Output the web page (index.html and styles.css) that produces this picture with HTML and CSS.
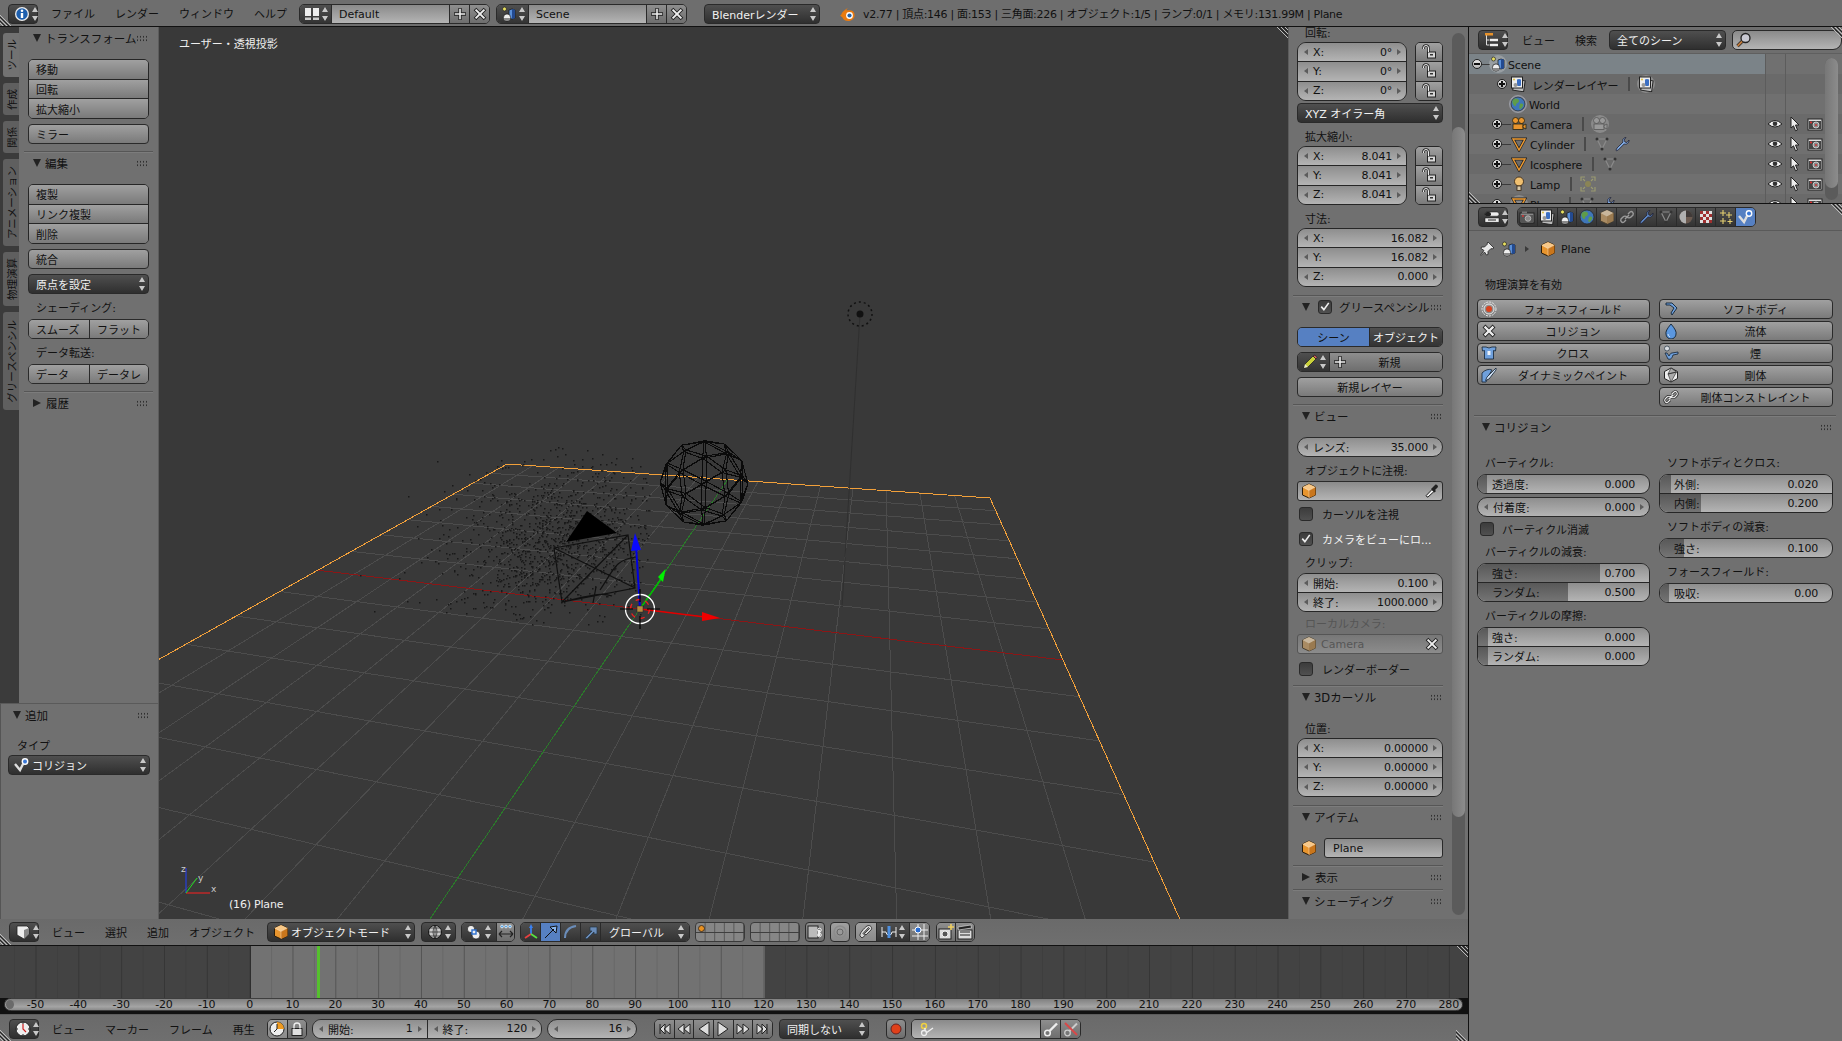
FILE: index.html
```html
<!DOCTYPE html>
<html lang="ja">
<head>
<meta charset="utf-8">
<title>Blender</title>
<link rel="stylesheet" href="styles.css">
</head>
<body>
<svg class="sprite" aria-hidden="true">
<symbol id="ud" viewBox="0 0 8 14"><path d="M4 0l3 5H1zM4 14L1 9h6z"/></symbol>
<symbol id="corner-bl" viewBox="0 0 12 12"><path d="M0 1l11 11M0 5l7 7M0 9l3 3" stroke="#bbb" fill="none"/><path d="M0 3l9 9M0 7l5 5" stroke="#222" fill="none"/></symbol>
<symbol id="corner-tr" viewBox="0 0 12 12"><path d="M1 0l11 11M5 0l7 7M9 0l3 3" stroke="#bbb" fill="none"/><path d="M3 0l9 9M7 0l5 5" stroke="#222" fill="none"/></symbol>
<symbol id="info" viewBox="0 0 16 16"><circle cx="8" cy="8" r="7" fill="#eee"/><circle cx="8" cy="8" r="5.7" fill="#1d5fae"/><rect x="6.8" y="7" width="2.4" height="5" fill="#fff"/><circle cx="8" cy="4.8" r="1.3" fill="#fff"/></symbol>
<symbol id="layout" viewBox="0 0 16 16"><rect x="1" y="2" width="6" height="8" fill="#eee"/><rect x="9" y="2" width="6" height="8" fill="#eee"/><rect x="1" y="11.5" width="6" height="2.5" fill="#ccc"/><rect x="9" y="11.5" width="6" height="2.5" fill="#ccc"/></symbol>
<symbol id="plus" viewBox="0 0 16 16"><path d="M8 2v12M2 8h12" stroke="#222" stroke-width="3.4"/><path d="M8 2.8v10.4M2.8 8h10.4" stroke="#eee" stroke-width="1.6"/></symbol>
<symbol id="cross" viewBox="0 0 16 16"><path d="M3 3l10 10M13 3L3 13" stroke="#222" stroke-width="3.8"/><path d="M3.6 3.6l8.8 8.8M12.4 3.6l-8.8 8.8" stroke="#eee" stroke-width="2"/></symbol>
<symbol id="scene" viewBox="0 0 16 16"><circle cx="3.5" cy="3" r="2" fill="#e8e060" stroke="#222" stroke-width=".7"/><path d="M8 4q3-2 6 0v8q-3 2-6 0z" fill="#5a8fd8" stroke="#111" stroke-width=".7"/><path d="M11 3v10q2 0 3-1V4q-1-1-3-1z" fill="#234a90"/><circle cx="6" cy="11.5" r="3.6" fill="#eee" stroke="#111" stroke-width=".7"/><path d="M3 12a3 3 0 0 0 6 0z" fill="#888"/></symbol>
<symbol id="logo" viewBox="0 0 16 16"><path d="M1 10C1 6 6 3 8 2L6 4.2h3.5c4 0 5.5 3 5 6-.6 3-3.5 4.8-6.5 4.8-3 0-5-1.600-5.500-3.500L0 9.500l3-1.500z" fill="#e87a10"/><circle cx="9.500" cy="9.500" r="3.400" fill="#fff"/><circle cx="9.500" cy="9.500" r="2.100" fill="#2663a8"/></symbol>
<symbol id="cube" viewBox="0 0 16 16"><path d="M8 1l6.500 3v8L8 15l-6.500-3V4z" fill="#e8952e" stroke="#2a1c0a"/><path d="M8 1l6.500 3L8 7.500 1.500 4z" fill="#f8c888"/><path d="M8 7.500V15l6.500-3V4z" fill="#c9761c"/><path d="M8 7.500V15M1.500 4L8 7.500l6.500-3.500" fill="none" stroke="#fff" stroke-opacity=".5" stroke-width=".7"/></symbol>
<symbol id="cubeg" viewBox="0 0 16 16"><path d="M8 1l6.500 3v8L8 15l-6.500-3V4z" fill="#a98b63" stroke="#4a4030"/><path d="M8 1l6.500 3L8 7.500 1.500 4z" fill="#c8b69c"/><path d="M8 7.500V15l6.500-3V4z" fill="#9a7a50"/></symbol>
<symbol id="lock" viewBox="0 0 16 16"><rect x="6.500" y="8" width="8" height="6" fill="#d8d8d8" stroke="#222"/><rect x="9" y="10" width="3" height="1.500" fill="#333"/><path d="M7.500 8V4a2.500 2.500 0 0 0-5 0v1" fill="none" stroke="#222" stroke-width="2.400"/><path d="M7.500 8V4a2.500 2.500 0 0 0-5 0v1" fill="none" stroke="#eee" stroke-width="1"/></symbol>
<symbol id="check" viewBox="0 0 16 16"><path d="M3 7.500l3.500 4L13 2.500" fill="none" stroke="#eee" stroke-width="2.200"/></symbol>
<symbol id="pencil" viewBox="0 0 16 16"><path d="M2 14l1-4L11 2l3 3-8 8z" fill="#c9d03a" stroke="#222" stroke-width=".8"/><path d="M11 2l3 3 1-1.500L13 1z" fill="#e06060" stroke="#222" stroke-width=".8"/><path d="M2 14l1-4 3 3z" fill="#eec"/></symbol>
<symbol id="dropper" viewBox="0 0 16 16"><path d="M3 14l-.8-1.500L8 6.500 10 8.500 4 14z" fill="#eee" stroke="#222"/><path d="M8 5l3-3c1-1 3 0 3 2l-3 3 1 1-1.500 1.500L7 6l1-1z" fill="#222"/></symbol>
<symbol id="outliner" viewBox="0 0 16 16"><path d="M2.500 2v11h3M2.500 8h3" fill="none" stroke="#ddd"/><rect x="1" y="1" width="8" height="2.500" fill="#e8922a"/><rect x="6" y="6.800" width="8" height="2.400" fill="#eee"/><rect x="6" y="11.800" width="8" height="2.400" fill="#eee"/></symbol>
<symbol id="search" viewBox="0 0 16 16"><circle cx="9.500" cy="6" r="4.500" fill="#c9c9d2" stroke="#222" stroke-width="1.300"/><path d="M6 9.500l-4.500 4.500" stroke="#222" stroke-width="3.200"/><path d="M6 9.500l-4.500 4.500" stroke="#c07a3c" stroke-width="1.800"/></symbol>
<symbol id="rlayer" viewBox="0 0 16 16"><rect x="3.500" y="4" width="11" height="11" fill="#bbb" stroke="#222" transform="rotate(8 9 9)"/><rect x="1.500" y="1" width="11" height="11" fill="#eee" stroke="#222"/><path d="M7 3.500q2-1 4 0v6q-2 1-4 0z" fill="#3b6fc4"/><circle cx="5.500" cy="9" r="2" fill="#999"/><circle cx="4" cy="3.500" r="1" fill="#e0c040"/></symbol>
<symbol id="world" viewBox="0 0 16 16"><circle cx="8" cy="8" r="7" fill="#3f76b8" stroke="#222" stroke-width=".7"/><path d="M4 3c3-1 5 0 5 2s-3 2-3 4-2 1-3-1-1-4 1-5zM10 8c2-1 4 0 3 2s-2 3-3 3-1-3 0-5z" fill="#5f9c4a"/></symbol>
<symbol id="cam" viewBox="0 0 16 16"><circle cx="4.500" cy="4.500" r="3" fill="#e8952e" stroke="#221" stroke-width=".8"/><circle cx="10.500" cy="4.500" r="3" fill="#e8952e" stroke="#221" stroke-width=".8"/><rect x="2" y="8" width="10" height="5.500" fill="#e8952e" stroke="#221" stroke-width=".8"/><path d="M12 9.500l3-1.500v5l-3-1.500z" fill="#e8952e" stroke="#221" stroke-width=".8"/></symbol>
<symbol id="camg" viewBox="0 0 16 16"><circle cx="4.500" cy="4.500" r="3" fill="#999" stroke="#555" stroke-width=".8"/><circle cx="10.500" cy="4.500" r="3" fill="#999" stroke="#555" stroke-width=".8"/><rect x="2" y="8" width="10" height="5.500" fill="#999" stroke="#555" stroke-width=".8"/><path d="M12 9.500l3-1.500v5l-3-1.500z" fill="#999" stroke="#555" stroke-width=".8"/></symbol>
<symbol id="mesh" viewBox="0 0 16 16"><path d="M2 3h12L8 14z" fill="none" stroke="#222" stroke-width="2.800"/><path d="M2 3h12L8 14z" fill="none" stroke="#ee9a30" stroke-width="1.400"/></symbol>
<symbol id="meshg" viewBox="0 0 16 16"><path d="M3 3h10L8 13z" fill="none" stroke="#8a8a8a" stroke-width="1.200"/><circle cx="3" cy="3" r="1.500" fill="#333"/><circle cx="13" cy="3" r="1.500" fill="#333"/><circle cx="8" cy="13" r="1.500" fill="#333"/></symbol>
<symbol id="wrench" viewBox="0 0 16 16"><path d="M2 14l1-2 6-6c-1-2 0-4 3-4.500L10 4l1 2 2 .5L15 4c.3 3-2.500 5-4.800 4l-6 6-1.800.800z" fill="#7fa9e0" stroke="#223" stroke-width=".8"/></symbol>
<symbol id="wrenchg" viewBox="0 0 16 16"><path d="M2 14l1-2 6-6c-1-2 0-4 3-4.500L10 4l1 2 2 .5L15 4c.3 3-2.500 5-4.800 4l-6 6-1.800.800z" fill="#5c84bf" stroke="#223" stroke-width=".8"/></symbol>
<symbol id="bulb" viewBox="0 0 16 16"><circle cx="8" cy="5.500" r="4.500" fill="#f0c070" stroke="#321" stroke-width=".8"/><rect x="6" y="10" width="4" height="4.500" fill="#d8c8a8" stroke="#321" stroke-width=".8"/></symbol>
<symbol id="burst" viewBox="0 0 16 16"><circle cx="8" cy="8" r="3" fill="#8a8455"/><path d="M1 5V1h4M11 1h4v4M15 11v4h-4M5 15H1v-4M3 3l2 2M13 3l-2 2M3 13l2-2M13 13l-2-2" fill="none" stroke="#9a9a70" stroke-width="1.200"/></symbol>
<symbol id="eye" viewBox="0 0 16 16"><path d="M1 8q7-7 14 0-7 6-14 0z" fill="#eee" stroke="#222"/><circle cx="8" cy="7.800" r="2.300" fill="#333"/></symbol>
<symbol id="cursor" viewBox="0 0 16 16"><path d="M4 1l8 8H8.500l2 5-2 .8-2-5L4 12z" fill="#eee" stroke="#222"/></symbol>
<symbol id="rcam" viewBox="0 0 16 16"><rect x="1" y="3" width="14" height="11" fill="#ddd" stroke="#222"/><rect x="2" y="5" width="12" height="8" fill="#444"/><circle cx="9" cy="9" r="3" fill="#888" stroke="#eee" stroke-width=".7"/><circle cx="4" cy="6.500" r="1" fill="#e33"/><circle cx="9" cy="9" r="1" fill="#c33"/></symbol>
<symbol id="rcamg" viewBox="0 0 16 16"><rect x="1" y="4" width="14" height="10" fill="#888" stroke="#222"/><rect x="3" y="2.500" width="5" height="2" fill="#777"/><rect x="2" y="6" width="12" height="7" fill="#555"/><circle cx="9" cy="9.500" r="2.800" fill="#888" stroke="#ccc" stroke-width=".7"/><circle cx="4" cy="7" r=".9" fill="#d33"/></symbol>
<symbol id="props" viewBox="0 0 16 16"><rect x="1" y="3" width="14" height="4.200" rx="2" fill="#eee" stroke="#111" stroke-width=".5"/><rect x="1" y="3" width="6" height="4.200" rx="2" fill="#222"/><rect x="1" y="9" width="14" height="4.200" fill="#eee" stroke="#111" stroke-width=".5"/><path d="M4 11h8" stroke="#222"/></symbol>
<symbol id="link" viewBox="0 0 16 16"><path d="M7 11l-2 2c-2 1.500-4-1-3-3l2-2c1-1 3-1 4 0M9 5l2-2c2-1.500 4 1 3 3l-2 2c-1 1-3 1-4 0" fill="none" stroke="#222" stroke-width="2.600"/><path d="M7 11l-2 2c-2 1.500-4-1-3-3l2-2c1-1 3-1 4 0M9 5l2-2c2-1.500 4 1 3 3l-2 2c-1 1-3 1-4 0M6 10l4-4" fill="none" stroke="#e8e8e8" stroke-width="1.200"/></symbol>
<symbol id="linkg" viewBox="0 0 16 16"><path d="M7 11l-2 2c-2 1.500-4-1-3-3l2-2c1-1 3-1 4 0M9 5l2-2c2-1.500 4 1 3 3l-2 2c-1 1-3 1-4 0M6 10l4-4" fill="none" stroke="#9a9a9a" stroke-width="1.400"/></symbol>
<symbol id="mat" viewBox="0 0 16 16"><circle cx="8" cy="8" r="6.500" fill="#6b5a50"/><path d="M8 1.500a6.500 6.500 0 0 0 0 13z" fill="#b0b0b0"/><path d="M8 1.500a6.500 6.500 0 0 1 6.500 6.500H8z" fill="#403a38"/></symbol>
<symbol id="tex" viewBox="0 0 16 16"><rect x="2" y="2" width="12" height="12" fill="#e0e0e0"/><path d="M2 2h3v3H2zM8 2h3v3H8zM5 5h3v3H5zM11 5h3v3h-3zM2 8h3v3H2zM8 8h3v3H8zM5 11h3v3H5zM11 11h3v3h-3z" fill="#a03030"/></symbol>
<symbol id="part" viewBox="0 0 16 16"><path d="M5 1v6M2 4h6M11 3v6M8 6h6M5 9v6M2 12h6M12 10v5M9.500 12.500h5" stroke="#e6d070" stroke-width="1.100"/></symbol>
<symbol id="phys" viewBox="0 0 16 16"><path d="M1 7l5 6 3-6" fill="none" stroke="#ddd" stroke-width="2.400"/><circle cx="11" cy="4.500" r="3.400" fill="#fff"/><circle cx="11" cy="4.500" r="2" fill="#3a78d8"/></symbol>
<symbol id="pin" viewBox="0 0 16 16"><path d="M9 1l6 6-2 1-1-.5-3 3 0 3-1.500.5-2-3L2 14.500 1.500 14 5 9.500 2 7.500l.5-1.500 3 0 3-3-.5-1z" fill="#e8e8e8" stroke="#222" stroke-width=".8"/></symbol>
<symbol id="ff" viewBox="0 0 16 16"><circle cx="8" cy="8" r="7" fill="none" stroke="#e8e8e8" stroke-dasharray="2 1"/><circle cx="8" cy="8" r="5" fill="none" stroke="#e8e8e8"/><circle cx="8" cy="8" r="3" fill="#d8421e"/></symbol>
<symbol id="cx" viewBox="0 0 16 16"><path d="M3 3l10 10M13 3L3 13" stroke="#222" stroke-width="4"/><path d="M3.600 3.600l8.800 8.800M12.400 3.600l-8.800 8.800" stroke="#eee" stroke-width="2.200"/></symbol>
<symbol id="cloth" viewBox="0 0 16 16"><path d="M1 2h4l3 1 3-1h4l-.5 4-2-.5V14h-9V5.500l-2 .5z" fill="#6fa0dc" stroke="#123" stroke-width=".8"/><rect x="6.500" y="6" width="3" height="4" fill="#ecf2fa"/></symbol>
<symbol id="dp" viewBox="0 0 16 16"><path d="M1 6q5-5 10-3L8 8 5 15H1z" fill="#6fa0dc" stroke="#123" stroke-width=".8"/><path d="M15 1L6 10l-1.500 3.500L8 12l7-9z" fill="#cfe0f4" stroke="#123" stroke-width=".8"/></symbol>
<symbol id="soft" viewBox="0 0 16 16"><path d="M3 2h6l5 5-5 7-1-2 3-5-4-3H3z" fill="#6fa0dc" stroke="#123" stroke-width=".9"/></symbol>
<symbol id="drop" viewBox="0 0 16 16"><path d="M8 1q6 7 5 10a5 5 0 0 1-10 0Q2 8 8 1z" fill="#5b97df" stroke="#123" stroke-width=".9"/><path d="M5 11q0 2 2 3" stroke="#cfe0f8" fill="none"/></symbol>
<symbol id="smoke" viewBox="0 0 16 16"><circle cx="4" cy="3.500" r="2.500" fill="#d7dbe0" stroke="#234" stroke-width=".7"/><path d="M2 8l3 6c3 1 4-1 5-4l5-1V7l-6 1c-2 0-2 2-3 3L4 8z" fill="#6fa0dc" stroke="#123" stroke-width=".8"/></symbol>
<symbol id="rigid" viewBox="0 0 16 16"><path d="M8 1l6.500 3.500v7L8 15l-6.500-3.500v-7z" fill="#eee" stroke="#222"/><path d="M8 1l-3 6 8.500-2zM5 7l3 8 5.500-10z" fill="#aaa" stroke="#222" stroke-width=".6"/></symbol>
<symbol id="view3d" viewBox="0 0 16 16"><path d="M2 2h10l2 2v6l-5 5-7-4z" fill="#eee" stroke="#222" stroke-width=".8"/><path d="M9 6l5-2v6l-5 5z" fill="#888"/></symbol>
<symbol id="globe" viewBox="0 0 16 16"><circle cx="8" cy="8" r="6.500" fill="#ccc" stroke="#111"/><path d="M1.500 8h13M8 1.500v13M3 4h10M3 12h10M8 1.500q-4 6.500 0 13M8 1.500q4 6.500 0 13" fill="none" stroke="#222" stroke-width=".7"/></symbol>
<symbol id="pivot" viewBox="0 0 16 16"><circle cx="5" cy="5" r="3.600" fill="#eee" stroke="#111" stroke-width=".6"/><circle cx="10" cy="11" r="4" fill="#eee" stroke="#111" stroke-width=".6"/><rect x="6" y="6" width="4" height="4" fill="#eee" stroke="#2b6fd0" stroke-width="1.400"/></symbol>
<symbol id="align" viewBox="0 0 16 16"><circle cx="4" cy="2.500" r="1.400" fill="#4ea0e8" stroke="#fff" stroke-width=".7"/><circle cx="8" cy="2.500" r="1.400" fill="#4ea0e8" stroke="#fff" stroke-width=".7"/><circle cx="12" cy="2.500" r="1.400" fill="#4ea0e8" stroke="#fff" stroke-width=".7"/><path d="M1 10h14M1 10l3-3M1 10l3 3M15 10l-3-3M15 10l-3 3" fill="none" stroke="#222" stroke-width="1.200"/></symbol>
<symbol id="axes" viewBox="0 0 16 16"><path d="M8 10V2" stroke="#3a80f0" stroke-width="1.800"/><path d="M8 10l-6 4" stroke="#e84040" stroke-width="1.800"/><path d="M8 10l6 4" stroke="#58e040" stroke-width="1.800"/><path d="M8 0l2 4H6z" fill="#3a80f0"/></symbol>
<symbol id="mtrans" viewBox="0 0 16 16"><path d="M2 14l9-9M7 3l7-1-1 7z" fill="#8ab6ef" stroke="#111" stroke-width="1"/></symbol>
<symbol id="mrot" viewBox="0 0 16 16"><path d="M2 14C2 7 6 3 13 2" fill="none" stroke="#6a8cb8" stroke-width="2"/></symbol>
<symbol id="mscale" viewBox="0 0 16 16"><path d="M2 14l7-7h-2V3h7v7h-3V8l-7 7z" fill="#6a8cb8" stroke="#234" stroke-width=".7"/></symbol>
<symbol id="chainbox" viewBox="0 0 16 16"><rect x="1" y="2" width="10" height="12" fill="#bbb" stroke="#222"/><path d="M12 6v6" stroke="#eee" stroke-width="2.500"/><circle cx="12.500" cy="6" r="1.800" fill="none" stroke="#eee"/><circle cx="12.500" cy="11" r="1.800" fill="none" stroke="#eee"/></symbol>
<symbol id="ring" viewBox="0 0 16 16"><circle cx="8" cy="8" r="6" fill="none" stroke="#8c8c8c" stroke-width="1.400"/><circle cx="8" cy="8" r="3" fill="#9a9a9a" stroke="#666"/></symbol>
<symbol id="magnet" viewBox="0 0 16 16"><path d="M4 14L2 12c-1-2 4-8 7-10s6 2 4 4l-5 5-1.500-1.500 5-5-1-1-5.500 6 2 2z" fill="#d8d8d8" stroke="#222" stroke-width=".8"/></symbol>
<symbol id="snap" viewBox="0 0 16 16"><path d="M1 8h4M1 3v10M15 3v10M11 8h4M5 8a3 3 0 0 0 6 0" stroke="#eee" fill="none"/><rect x="6.500" y="2" width="3" height="12" fill="#4e90e0"/></symbol>
<symbol id="snapg" viewBox="0 0 16 16"><path d="M0 6h16M0 12h16M6 0v16M12 0v16" stroke="#eee"/><circle cx="6" cy="6" r="3" fill="#2a6cd0" stroke="#fff"/></symbol>
<symbol id="gl" viewBox="0 0 16 16"><rect x="1" y="5" width="12" height="10" fill="#ddd" stroke="#222"/><circle cx="7" cy="10" r="3" fill="#555" stroke="#eee"/><path d="M13 0v6M10 3h6" stroke="#f0d060" stroke-width="1.600"/></symbol>
<symbol id="clap" viewBox="0 0 16 16"><rect x="1" y="6" width="14" height="9" fill="#ddd" stroke="#222"/><path d="M1 3l13-2 .5 3-13 2z" fill="#222" stroke="#eee" stroke-width=".6"/><path d="M3 8h10M3 11h10" stroke="#222"/></symbol>
<symbol id="clock" viewBox="0 0 16 16"><circle cx="8" cy="8" r="7" fill="#eee" stroke="#222"/><path d="M8 3v5l3 3" fill="none" stroke="#d02020" stroke-width="1.200"/><path d="M8 1v2M8 13v2M1 8h2M13 8h2" stroke="#222"/></symbol>
<symbol id="clockp" viewBox="0 0 16 16"><circle cx="8" cy="8" r="7" fill="#eee" stroke="#222"/><path d="M8 8V1a7 7 0 0 1 7 7z" fill="#ee9a20"/><path d="M8 8V3M8 8l-3 3" stroke="#222"/></symbol>
<symbol id="padlock" viewBox="0 0 16 16"><rect x="3" y="7.500" width="10" height="7" fill="#e0e0e0" stroke="#222"/><path d="M5 7.500V5a3 3 0 0 1 6 0v2.500" fill="none" stroke="#eee" stroke-width="1.400"/></symbol>
<symbol id="tjs" viewBox="0 0 16 16"><path d="M4 3v10M14 3L8 8l6 5zM9 3L4 8l5 5z" fill="#ddd" stroke="#222"/></symbol>
<symbol id="tkey" viewBox="0 0 16 16"><path d="M14 3L8 8l6 5zM8 3L2 8l6 5z" fill="#ddd" stroke="#222"/></symbol>
<symbol id="tplayb" viewBox="0 0 16 16"><path d="M13 1L3 8l10 7z" fill="#ddd" stroke="#222"/></symbol>
<symbol id="tplay" viewBox="0 0 16 16"><path d="M3 1l10 7-10 7z" fill="#ddd" stroke="#222"/></symbol>
<symbol id="tkeyf" viewBox="0 0 16 16"><path d="M2 3l6 5-6 5zM8 3l6 5-6 5z" fill="#ddd" stroke="#222"/></symbol>
<symbol id="tje" viewBox="0 0 16 16"><path d="M12 3v10M2 3l6 5-6 5zM7 3l5 5-5 5z" fill="#ddd" stroke="#222"/></symbol>
<symbol id="rec" viewBox="0 0 16 16"><circle cx="8" cy="8" r="5" fill="#e0401a" stroke="#622"/></symbol>
<symbol id="keyring" viewBox="0 0 16 16"><circle cx="5" cy="5" r="2.500" fill="none" stroke="#f0d040" stroke-width="1.500"/><circle cx="5" cy="12" r="2.500" fill="none" stroke="#eee" stroke-width="1.300"/><path d="M6 7v3M7 12l7-5" stroke="#eee" stroke-width="1.500"/></symbol>
<symbol id="key" viewBox="0 0 16 16"><circle cx="4.500" cy="12" r="2.800" fill="none" stroke="#eee" stroke-width="1.500"/><path d="M6.500 10L14 2.500" stroke="#eee" stroke-width="2.400"/></symbol>
<symbol id="keyx" viewBox="0 0 16 16"><circle cx="4.500" cy="12" r="2.800" fill="none" stroke="#ccc" stroke-width="1.300"/><path d="M6.500 10L14 2.500" stroke="#ccc" stroke-width="2"/><path d="M2 2l12 12" stroke="#d84848" stroke-width="2"/></symbol>
</svg>

<div class="app">
<header class="topbar">
  <div class="w drop w30 ic"><svg class="i"><use href="#info"/></svg><svg class="ud"><use href="#ud"/></svg></div>
  <nav class="menus m-top"><span>ファイル</span><span>レンダー</span><span>ウィンドウ</span><span>ヘルプ</span></nav>
  <div class="seg w191">
    <div class="cell dark w31 ic"><svg class="i"><use href="#layout"/></svg><svg class="ud"><use href="#ud"/></svg></div>
    <div class="cell tf grow">Default</div>
    <div class="cell g ctr w20"><svg class="i"><use href="#plus"/></svg></div>
    <div class="cell g ctr w20"><svg class="i"><use href="#cross"/></svg></div>
  </div>
  <div class="seg w191 ml6">
    <div class="cell dark w31 ic"><svg class="i"><use href="#scene"/></svg><svg class="ud"><use href="#ud"/></svg></div>
    <div class="cell tf grow">Scene</div>
    <div class="cell g ctr w20"><svg class="i"><use href="#plus"/></svg></div>
    <div class="cell g ctr w20"><svg class="i"><use href="#cross"/></svg></div>
  </div>
  <div class="w drop w116 ml17"><span>Blenderレンダー</span><svg class="ud"><use href="#ud"/></svg></div>
  <svg class="i ml20"><use href="#logo"/></svg>
  <div class="stats">v2.77 | 頂点:146 | 面:153 | 三角面:226 | オブジェクト:1/5 | ランプ:0/1 | メモリ:131.99M | Plane</div>
  <svg class="corner bl"><use href="#corner-bl"/></svg>
</header>

<main class="work">
<section class="leftcol">
  <div class="viewrow">
    <aside class="toolcol">
      <div class="shelf">
        <div class="tabs">
          <div class="tab on t44"><span>ツール</span></div>
          <div class="tab t32"><span>作成</span></div>
          <div class="tab t32"><span>関係</span></div>
          <div class="tab t87"><span>アニメーション</span></div>
          <div class="tab t54"><span>物理演算</span></div>
          <div class="tab t98"><span>グリースペンシル</span></div>
        </div>
        <div class="panel tools">
          <div class="ph"><i class="tri"></i><b>トランスフォーム</b><i class="grip"></i></div>
          <div class="stack s60 mt10"><div class="btn">移動</div><div class="btn">回転</div><div class="btn">拡大縮小</div></div>
          <div class="w btn mt5">ミラー</div>
          <hr class="sep mt7">
          <div class="ph"><i class="tri"></i><b>編集</b><i class="grip"></i></div>
          <div class="stack s60 mt10"><div class="btn">複製</div><div class="btn">リンク複製</div><div class="btn">削除</div></div>
          <div class="w btn mt5">統合</div>
          <div class="w drop mt5"><span>原点を設定</span><svg class="ud"><use href="#ud"/></svg></div>
          <div class="lab l20 mt5">シェーディング:</div>
          <div class="hstack"><div class="btn b61">スムーズ</div><div class="btn grow">フラット</div></div>
          <div class="lab l20 mt5">データ転送:</div>
          <div class="hstack"><div class="btn b61">データ</div><div class="btn grow">データレ</div></div>
          <hr class="sep mt7">
          <div class="ph"><i class="tri r"></i><b>履歴</b><i class="grip"></i></div>
        </div>
      </div>
      <div class="panel oper">
        <div class="ph"><i class="tri"></i><b>追加</b><i class="grip"></i></div>
        <div class="lab mt11">タイプ</div>
        <div class="w drop"><span class="withic"><svg class="i"><use href="#phys"/></svg>コリジョン</span><svg class="ud"><use href="#ud"/></svg></div>
      </div>
    </aside>

    <div class="viewport">
      <svg id="scene3d" class="canvas" viewBox="159 27 1129 892" preserveAspectRatio="none">
        <g id="grid" class="crisp"></g>
        <path id="dots" class="dots"></path>
        <line x1="860" y1="314" x2="842" y2="607" class="lampline"/>
        <circle cx="860" cy="314" r="12" class="lampring"/>
        <circle cx="860" cy="314" r="3.500" class="lampcore"/>
        <path id="ico" class="wire crisp"></path>
        <path d="M587 511L566 542 617 533z" class="solid"/>
        <path class="wire1" d="M554 548L628 535 635 588 562 602zM554 548L635 588M628 535L562 602M562 602c24-6 40-10 50-6M593 603l3-16M600 590c14-20 14-30 36-33"/>
        <path d="M640 609L636 545" class="sh-blue"/>
        <path d="M635 533L641 550 631 551z" class="f-blue"/>
        <path d="M640 609L664 575" class="sh-green"/>
        <path d="M665.500 569L658 577 663 582z" class="f-green"/>
        <path d="M640 609L705 617" class="sh-red"/>
        <path d="M720 618L702 612 702 621z" class="f-red"/>
        <circle cx="640" cy="609" r="14.500" class="cur-w"/>
        <circle cx="640" cy="609" r="9.500" class="cur-r"/>
        <path d="M620 609h13M647 609h13M640 589v13M640 616v13" class="cur-k"/>
        <rect x="637" y="606" width="6" height="6" class="origin"/>
        <path d="M186 893V868" class="g-b"/><path d="M186 893H210" class="g-r"/><path d="M186 893L197 878" class="g-g"/>
        <text x="181" y="872" class="g-t">z</text><text x="198" y="881" class="g-t">y</text><text x="211" y="892" class="g-t">x</text>
      </svg>
      <div class="vlabel vl-top">ユーザー・透視投影</div>
      <div class="vlabel vl-bot">(16) Plane</div>
      <svg class="corner tr"><use href="#corner-tr"/></svg>
    </div>

    <aside class="npanel">
      <div class="panel ncontent">
        <div class="lab first">回転:</div>
        <div class="locked">
          <div class="stack s59 round">
            <div class="num"><i class="al"></i><span>X:</span><em>0°</em><i class="ar"></i></div>
            <div class="num"><i class="al"></i><span>Y:</span><em>0°</em><i class="ar"></i></div>
            <div class="num"><i class="al"></i><span>Z:</span><em>0°</em><i class="ar"></i></div>
          </div>
          <div class="stack s59 locks"><div class="btn ctr"><svg class="i"><use href="#lock"/></svg></div><div class="btn ctr"><svg class="i"><use href="#lock"/></svg></div><div class="btn ctr"><svg class="i"><use href="#lock"/></svg></div></div>
        </div>
        <div class="w drop mt2"><span>XYZ オイラー角</span><svg class="ud"><use href="#ud"/></svg></div>
        <div class="lab mt5">拡大縮小:</div>
        <div class="locked">
          <div class="stack s59 round">
            <div class="num"><i class="al"></i><span>X:</span><em>8.041</em><i class="ar"></i></div>
            <div class="num"><i class="al"></i><span>Y:</span><em>8.041</em><i class="ar"></i></div>
            <div class="num"><i class="al"></i><span>Z:</span><em>8.041</em><i class="ar"></i></div>
          </div>
          <div class="stack s59 locks"><div class="btn ctr"><svg class="i"><use href="#lock"/></svg></div><div class="btn ctr"><svg class="i"><use href="#lock"/></svg></div><div class="btn ctr"><svg class="i"><use href="#lock"/></svg></div></div>
        </div>
        <div class="lab mt5">寸法:</div>
        <div class="stack s59 round">
          <div class="num"><i class="al"></i><span>X:</span><em>16.082</em><i class="ar"></i></div>
          <div class="num"><i class="al"></i><span>Y:</span><em>16.082</em><i class="ar"></i></div>
          <div class="num"><i class="al"></i><span>Z:</span><em>0.000</em><i class="ar"></i></div>
        </div>
        <hr class="sep mt8">
        <div class="ph"><i class="tri"></i><span class="cb on ml4"><svg class="i12"><use href="#check"/></svg></span><b class="ml7">グリースペンシル</b><i class="grip"></i></div>
        <div class="seg mt9">
          <div class="cell active ctr w71">シーン</div>
          <div class="cell dark ctr grow white">オブジェクト</div>
        </div>
        <div class="seg mt5">
          <div class="cell dark w31 ic"><svg class="i"><use href="#pencil"/></svg><svg class="ud"><use href="#ud"/></svg></div>
          <div class="cell g grow newcell"><svg class="i"><use href="#plus"/></svg><span class="grow ctrtxt">新規</span></div>
        </div>
        <div class="w btn ctr mt5">新規レイヤー</div>
        <hr class="sep mt7">
        <div class="ph"><i class="tri"></i><b>ビュー</b><i class="grip"></i></div>
        <div class="num single mt10"><i class="al"></i><span>レンズ:</span><em>35.000</em><i class="ar"></i></div>
        <div class="lab mt5">オブジェクトに注視:</div>
        <div class="w tf square mt1"><svg class="i"><use href="#cube"/></svg><svg class="i auto"><use href="#dropper"/></svg></div>
        <div class="chk mt3"><span class="cb"></span>カーソルを注視</div>
        <div class="chk mt5 whitetxt"><span class="cb on"><svg class="i12"><use href="#check"/></svg></span>カメラをビューにロ...</div>
        <div class="lab mt5">クリップ:</div>
        <div class="stack s39 round mt1">
          <div class="num"><i class="al"></i><span>開始:</span><em>0.100</em><i class="ar"></i></div>
          <div class="num"><i class="al"></i><span>終了:</span><em>1000.000</em><i class="ar"></i></div>
        </div>
        <div class="lab mt3 dim">ローカルカメラ:</div>
        <div class="w tf square disabled mt1"><svg class="i"><use href="#cubeg"/></svg><span class="ml4">Camera</span><svg class="i auto"><use href="#cross"/></svg></div>
        <div class="chk mt5"><span class="cb"></span>レンダーボーダー</div>
        <hr class="sep mt6">
        <div class="ph"><i class="tri"></i><b>3Dカーソル</b><i class="grip"></i></div>
        <div class="lab mt12">位置:</div>
        <div class="stack s59 round">
          <div class="num"><i class="al"></i><span>X:</span><em>0.00000</em><i class="ar"></i></div>
          <div class="num"><i class="al"></i><span>Y:</span><em>0.00000</em><i class="ar"></i></div>
          <div class="num"><i class="al"></i><span>Z:</span><em>0.00000</em><i class="ar"></i></div>
        </div>
        <hr class="sep mt8">
        <div class="ph"><i class="tri"></i><b>アイテム</b><i class="grip"></i></div>
        <div class="itemrow mt10"><svg class="i"><use href="#cube"/></svg><div class="w tf square grow pad8">Plane</div></div>
        <hr class="sep mt7">
        <div class="ph"><i class="tri r"></i><b>表示</b><i class="grip"></i></div>
        <hr class="sep mt1">
        <div class="ph"><i class="tri"></i><b>シェーディング</b><i class="grip"></i></div>
      </div>
      <div class="nscroll"><div class="nthumb"></div></div>
    </aside>
  </div>

  <div class="hdr h26">
    <div class="w drop w30 ic"><svg class="i"><use href="#view3d"/></svg><svg class="ud"><use href="#ud"/></svg></div>
    <nav class="menus m-h"><span>ビュー</span><span>選択</span><span>追加</span><span>オブジェクト</span></nav>
    <div class="w drop w148"><span class="withic"><svg class="i"><use href="#cube"/></svg>オブジェクトモード</span><svg class="ud"><use href="#ud"/></svg></div>
    <div class="w drop w35 ml6 ic"><svg class="i"><use href="#globe"/></svg><svg class="ud"><use href="#ud"/></svg></div>
    <div class="seg w54 ml5">
      <div class="cell dark w34 ic"><svg class="i"><use href="#pivot"/></svg><svg class="ud"><use href="#ud"/></svg></div>
      <div class="cell g ctr grow"><svg class="i"><use href="#align"/></svg></div>
    </div>
    <div class="seg w170 ml5">
      <div class="cell dark ctr w19"><svg class="i"><use href="#axes"/></svg></div>
      <div class="cell active ctr w20"><svg class="i"><use href="#mtrans"/></svg></div>
      <div class="cell dark ctr w20"><svg class="i"><use href="#mrot"/></svg></div>
      <div class="cell dark ctr w20"><svg class="i"><use href="#mscale"/></svg></div>
      <div class="cell dark grow between white"><span class="pl8">グローバル</span><svg class="ud"><use href="#ud"/></svg></div>
    </div>
    <div class="layers ml5 firstdot"></div>
    <div class="layers ml5"></div>
    <div class="w g w20 ctr ml5 nopad"><svg class="i"><use href="#chainbox"/></svg></div>
    <div class="w g2 w20 ctr ml5 nopad"><svg class="i"><use href="#ring"/></svg></div>
    <div class="seg w75 ml5">
      <div class="cell g2 ctr w20"><svg class="i"><use href="#magnet"/></svg></div>
      <div class="cell dark ic grow"><svg class="i"><use href="#snap"/></svg><svg class="ud"><use href="#ud"/></svg></div>
      <div class="cell g ctr w20"><svg class="i"><use href="#snapg"/></svg></div>
    </div>
    <div class="seg w39 ml6">
      <div class="cell g ctr grow"><svg class="i"><use href="#gl"/></svg></div>
      <div class="cell g ctr grow"><svg class="i"><use href="#clap"/></svg></div>
    </div>
    <svg class="corner bl"><use href="#corner-bl"/></svg>
  </div>

  <div class="timeline">
    <div class="tl-out tl-a"></div><div class="tl-in"></div><div class="tl-out grow"></div>
    <div class="playhead"></div>
    <svg class="corner tr"><use href="#corner-tr"/></svg>
  </div>
  <div class="ruler">
    <i class="knob"></i>
    <span>-50</span><span>-40</span><span>-30</span><span>-20</span><span>-10</span><span>0</span><span>10</span><span>20</span><span>30</span><span>40</span><span>50</span><span>60</span><span>70</span><span>80</span><span>90</span><span>100</span><span>110</span><span>120</span><span>130</span><span>140</span><span>150</span><span>160</span><span>170</span><span>180</span><span>190</span><span>200</span><span>210</span><span>220</span><span>230</span><span>240</span><span>250</span><span>260</span><span>270</span><span>280</span>
  </div>

  <div class="hdr h27">
    <div class="w drop w30 ic"><svg class="i"><use href="#clock"/></svg><svg class="ud"><use href="#ud"/></svg></div>
    <nav class="menus m-h"><span>ビュー</span><span>マーカー</span><span>フレーム</span><span>再生</span></nav>
    <div class="seg w40">
      <div class="cell g2 ctr grow"><svg class="i"><use href="#clockp"/></svg></div>
      <div class="cell g ctr grow"><svg class="i"><use href="#padlock"/></svg></div>
    </div>
    <div class="seg round w230 ml5">
      <div class="num grow"><i class="al"></i><span>開始:</span><em>1</em><i class="ar"></i></div>
      <div class="num grow lb"><i class="al"></i><span>終了:</span><em>120</em><i class="ar"></i></div>
    </div>
    <div class="num single w90 ml5"><i class="al"></i><em>16</em><i class="ar"></i></div>
    <div class="seg w119 ml17">
      <div class="cell g ctr grow"><svg class="i"><use href="#tjs"/></svg></div>
      <div class="cell g ctr grow"><svg class="i"><use href="#tkey"/></svg></div>
      <div class="cell g ctr grow"><svg class="i"><use href="#tplayb"/></svg></div>
      <div class="cell g ctr grow"><svg class="i"><use href="#tplay"/></svg></div>
      <div class="cell g ctr grow"><svg class="i"><use href="#tkeyf"/></svg></div>
      <div class="cell g ctr grow"><svg class="i"><use href="#tje"/></svg></div>
    </div>
    <div class="w drop w90 ml6"><span>同期しない</span><svg class="ud"><use href="#ud"/></svg></div>
    <div class="w g w20 ctr ml17 nopad"><svg class="i"><use href="#rec"/></svg></div>
    <div class="seg w170 ml5">
      <div class="cell tf grow nopad"><svg class="i"><use href="#keyring"/></svg></div>
      <div class="cell g ctr w20"><svg class="i"><use href="#key"/></svg></div>
      <div class="cell g ctr w20"><svg class="i"><use href="#keyx"/></svg></div>
    </div>
    <svg class="corner bl"><use href="#corner-bl"/></svg>
    <svg class="corner br"><use href="#corner-bl"/></svg>
  </div>
</section>

<section class="rightcol">
  <div class="outliner">
    <div class="ohdr">
      <div class="w drop w30 ic"><svg class="i"><use href="#outliner"/></svg><svg class="ud"><use href="#ud"/></svg></div>
      <span class="om1">ビュー</span><span class="om2">検索</span>
      <div class="w drop w117 ml"><span>全てのシーン</span><svg class="ud"><use href="#ud"/></svg></div>
      <div class="w tf search"><svg class="i"><use href="#search"/></svg></div>
    </div>
    <div class="rows">
      <i class="treeline"></i>
      <div class="row sel r-scene"><i class="tog minus"></i><i class="stub s1"></i><span class="halo"><svg class="i"><use href="#scene"/></svg></span><span class="txt ml2">Scene</span></div>
      <div class="row alt r-layer"><i class="tog"></i><svg class="i ml3"><use href="#rlayer"/></svg><span class="txt ml6">レンダーレイヤー</span><i class="vs"></i><span class="halo"><svg class="i"><use href="#rlayer"/></svg></span></div>
      <div class="row r-world"><svg class="i halob"><use href="#world"/></svg><span class="txt ml3">World</span></div>
      <div class="row alt r-obj"><i class="tog"></i><i class="stub"></i><svg class="i"><use href="#cam"/></svg><span class="txt ml3">Camera</span><i class="vs"></i><span class="halo"><svg class="i"><use href="#camg"/></svg></span><span class="cols"><svg class="i"><use href="#eye"/></svg><svg class="i"><use href="#cursor"/></svg><svg class="i"><use href="#rcam"/></svg></span></div>
      <div class="row r-obj"><i class="tog"></i><i class="stub"></i><svg class="i"><use href="#mesh"/></svg><span class="txt ml3">Cylinder</span><i class="vs"></i><svg class="i"><use href="#meshg"/></svg><svg class="i ml4"><use href="#wrench"/></svg><span class="cols"><svg class="i"><use href="#eye"/></svg><svg class="i"><use href="#cursor"/></svg><svg class="i"><use href="#rcam"/></svg></span></div>
      <div class="row alt r-obj"><i class="tog"></i><i class="stub"></i><svg class="i"><use href="#mesh"/></svg><span class="txt ml3">Icosphere</span><i class="vs"></i><svg class="i"><use href="#meshg"/></svg><span class="cols"><svg class="i"><use href="#eye"/></svg><svg class="i"><use href="#cursor"/></svg><svg class="i"><use href="#rcam"/></svg></span></div>
      <div class="row r-obj"><i class="tog"></i><i class="stub"></i><svg class="i"><use href="#bulb"/></svg><span class="txt ml3">Lamp</span><i class="vs"></i><svg class="i"><use href="#burst"/></svg><span class="cols"><svg class="i"><use href="#eye"/></svg><svg class="i"><use href="#cursor"/></svg><svg class="i"><use href="#rcam"/></svg></span></div>
      <div class="row alt r-obj"><i class="tog"></i><i class="stub"></i><span class="halo sm"><svg class="i"><use href="#mesh"/></svg></span><span class="txt ml3">Plane</span><i class="vs"></i><svg class="i"><use href="#meshg"/></svg><svg class="i ml4"><use href="#wrench"/></svg><span class="cols"><svg class="i"><use href="#eye"/></svg><svg class="i"><use href="#cursor"/></svg><svg class="i"><use href="#rcam"/></svg></span></div>
      <div class="oscroll"><div class="othumb"></div></div>
    </div>
    <svg class="corner tr"><use href="#corner-tr"/></svg>
    <svg class="corner bl"><use href="#corner-bl"/></svg>
  </div>
  <div class="props">
    <div class="phdr">
      <div class="w drop w30 ic"><svg class="i"><use href="#props"/></svg><svg class="ud"><use href="#ud"/></svg></div>
      <div class="seg w239 ml9">
        <div class="cell dark ctr grow"><svg class="i"><use href="#rcamg"/></svg></div>
        <div class="cell dark ctr grow"><svg class="i"><use href="#rlayer"/></svg></div>
        <div class="cell dark ctr grow"><svg class="i"><use href="#scene"/></svg></div>
        <div class="cell dark ctr grow"><svg class="i"><use href="#world"/></svg></div>
        <div class="cell dark ctr grow"><svg class="i"><use href="#cubeg"/></svg></div>
        <div class="cell dark ctr grow"><svg class="i"><use href="#linkg"/></svg></div>
        <div class="cell dark ctr grow"><svg class="i"><use href="#wrenchg"/></svg></div>
        <div class="cell dark ctr grow"><svg class="i"><use href="#meshg"/></svg></div>
        <div class="cell dark ctr grow"><svg class="i"><use href="#mat"/></svg></div>
        <div class="cell dark ctr grow"><svg class="i"><use href="#tex"/></svg></div>
        <div class="cell dark ctr grow"><svg class="i"><use href="#part"/></svg></div>
        <div class="cell active ctr grow"><svg class="i"><use href="#phys"/></svg></div>
      </div>
      <svg class="corner tr"><use href="#corner-tr"/></svg>
    </div>
    <div class="panel pbody">
      <div class="crumb"><svg class="i"><use href="#pin"/></svg><svg class="i ml6"><use href="#scene"/></svg><i class="crumbtri"></i><svg class="i ml9b"><use href="#cube"/></svg><span>Plane</span></div>
      <div class="lab mt16">物理演算を有効</div>
      <div class="physgrid mt5">
        <div class="w btn pb"><svg class="i"><use href="#ff"/></svg><span>フォースフィールド</span></div>
        <div class="w btn pb"><svg class="i"><use href="#soft"/></svg><span>ソフトボディ</span></div>
        <div class="w btn pb"><svg class="i"><use href="#cx"/></svg><span>コリジョン</span></div>
        <div class="w btn pb"><svg class="i"><use href="#drop"/></svg><span>流体</span></div>
        <div class="w btn pb"><svg class="i"><use href="#cloth"/></svg><span>クロス</span></div>
        <div class="w btn pb"><svg class="i"><use href="#smoke"/></svg><span>煙</span></div>
        <div class="w btn pb"><svg class="i"><use href="#dp"/></svg><span>ダイナミックペイント</span></div>
        <div class="w btn pb"><svg class="i"><use href="#rigid"/></svg><span>剛体</span></div>
        <div></div>
        <div class="w btn pb"><svg class="i"><use href="#link"/></svg><span>剛体コンストレイント</span></div>
      </div>
      <hr class="sep wide mt8">
      <div class="ph"><i class="tri mltri"></i><b>コリジョン</b><i class="grip"></i></div>
      <div class="cols2 mt16">
        <div class="col">
          <div class="lab">バーティクル:</div>
          <div class="sl mt2"><i class="fill" style="width:9px"></i><span>透過度:</span><em>0.000</em></div>
          <div class="num single mt3"><i class="al"></i><span>付着度:</span><em>0.000</em><i class="ar"></i></div>
          <div class="chk mt2 pchk"><span class="cb"></span>バーティクル消滅</div>
          <div class="lab mt4">バーティクルの減衰:</div>
          <div class="stack s39 round mt2">
            <div class="sl"><i class="fill" style="width:122px"></i><span>強さ:</span><em>0.700</em></div>
            <div class="sl"><i class="fill" style="width:90px"></i><span>ランダム:</span><em>0.500</em></div>
          </div>
          <div class="lab mt5">バーティクルの摩擦:</div>
          <div class="stack s39 round mt2">
            <div class="sl"><i class="fill" style="width:10px"></i><span>強さ:</span><em>0.000</em></div>
            <div class="sl"><i class="fill" style="width:10px"></i><span>ランダム:</span><em>0.000</em></div>
          </div>
        </div>
        <div class="col">
          <div class="lab">ソフトボディとクロス:</div>
          <div class="stack s39 round mt2">
            <div class="sl"><i class="fill" style="width:11px"></i><span>外側:</span><em>0.020</em></div>
            <div class="sl"><i class="fill" style="width:41px"></i><span>内側:</span><em>0.200</em></div>
          </div>
          <div class="lab mt5">ソフトボディの減衰:</div>
          <div class="sl mt2"><i class="fill" style="width:24px"></i><span>強さ:</span><em>0.100</em></div>
          <div class="lab mt5">フォースフィールド:</div>
          <div class="sl mt2"><i class="fill" style="width:9px"></i><span>吸収:</span><em>0.00</em></div>
        </div>
      </div>
    </div>
  </div>
</section>
</main>
</div>
<script src="script.js"></script>
</body>
</html>
```

FILE: styles.css
```css
* { box-sizing: border-box; }
html, body { margin: 0; padding: 0; width: 1842px; height: 1041px; overflow: hidden; }
body { background: #707070; color: #111; font: 11px "DejaVu Sans", "Noto Sans CJK JP", sans-serif; }
.sprite { display: none; }
.i { width: 16px; height: 16px; flex: none; display: block; }
.i12 { width: 12px; height: 12px; display: block; }
.ud { width: 8px; height: 14px; flex: none; fill: #c8c8c8; }
.app { display: flex; flex-direction: column; width: 1842px; height: 1041px; }
.topbar { position: relative; display: flex; align-items: flex-start; height: 27px; padding: 4px 0 0 8px; background: #6e6e6e; border-bottom: 1px solid #111; flex: none; }
.topbar > .menus, .topbar > .stats { line-height: 20px; margin-top: 1px; }
.topbar > .i { margin-top: 2px; }
.work { display: flex; height: 1014px; flex: none; background: #111; }
.leftcol { width: 1468px; flex: none; display: flex; flex-direction: column; }
.rightcol { width: 373px; flex: none; margin-left: 1px; display: flex; flex-direction: column; }
.viewrow { display: flex; height: 892px; flex: none; }
.topbar > .stats { margin-left: 7px; white-space: nowrap; letter-spacing: -.3px; }

.corner { position: absolute; width: 12px; height: 12px; pointer-events: none; }
.corner.bl { left: 0; bottom: 0; }
.corner.tr { right: 0; top: 0; }
.corner.br { right: 0; bottom: 0; }

.w, .cell, .btn, .num, .sl { display: flex; align-items: center; white-space: nowrap; }
.w { height: 20px; flex: none; border: 1px solid #2a2a2a; border-radius: 4px; padding: 0 7px; }
.btn { background: linear-gradient(#a0a0a0, #7a7a7a); padding: 0 7px; }
.w.drop { background: linear-gradient(#4f4f4f, #2f2f2f); color: #f0f0f0; justify-content: space-between; padding: 0 2px 0 7px; }
.g, .cell.g { background: linear-gradient(#8e8e8e, #6e6e6e); }
.g2, .cell.g2 { background: linear-gradient(#a0a0a0, #8a8a8a); }
.tf { background: linear-gradient(#8a8a8a, #b4b4b4); color: #111; padding: 0 7px; }
.w.square { border-radius: 3px; padding: 0 2px 0 3px; }
.dark { background: linear-gradient(#4f4f4f, #333); }
.active { background: #5680c2; color: #111; }
.white { color: #f0f0f0; }
.disabled { background: linear-gradient(#777, #8c8c8c); color: #565656; border-color: #555; }
.auto { margin-left: auto; }
.w.ic, .ic { padding: 0 4px 0 5px; justify-content: space-between; gap: 1px; }
.ctr { justify-content: center; text-align: center; }
.between { justify-content: space-between; padding-right: 3px; }
.grow { flex: 1 1 0; min-width: 0; }
.w.nopad, .cell.nopad { padding: 0 1px; }
.w.square.pad8 { padding: 0 7px 0 8px; }
.pl8 { padding-left: 4px; }

.seg { display: flex; height: 20px; flex: none; border: 1px solid #2a2a2a; border-radius: 5px; overflow: hidden; }
.seg .cell { height: 100%; flex-shrink: 0; }
.seg .cell.grow { flex: 1 1 0; }
.seg .cell + .cell { border-left: 1px solid #2a2a2a; }
.seg.round { border-radius: 9px; }
.seg .num { height: 100%; }
.seg .lb { border-left: 1px solid #2a2a2a; }
.cell { padding: 0 4px; }
.cell.tf { padding: 0 7px; }
.cell.newcell { padding: 0 2px; }
.ctrtxt { text-align: center; margin-right: 9px; }

.w20 { width: 20px; } .w19 { width: 19px; } .w30 { width: 30px; } .w31 { width: 31px; } .w34 { width: 34px; } .w35 { width: 35px; }
.w39 { width: 39px; } .w40 { width: 40px; } .w54 { width: 54px; } .w71 { width: 71px; } .w75 { width: 75px; } .w90 { width: 90px; }
.w116 { width: 116px; } .w117 { width: 117px; } .w119 { width: 119px; } .w148 { width: 148px; } .w170 { width: 170px; } .w191 { width: 191px; }
.w230 { width: 230px; } .w239 { width: 239px; }
.ml2 { margin-left: 2px; } .ml3 { margin-left: 3px; } .ml4 { margin-left: 4px; } .ml5 { margin-left: 5px; } .ml6 { margin-left: 6px; } .ml7 { margin-left: 7px; } .ml9 { margin-left: 9px; } .ml9b { margin-left: 17px; } .ml17 { margin-left: 17px; } .ml20 { margin-left: 20px; } .ml22 { margin-left: 22px; }
.mt1 { margin-top: 1px; } .mt2 { margin-top: 2px; } .mt3 { margin-top: 3px; } .mt4 { margin-top: 4px; } .mt5 { margin-top: 5px; } .mt6 { margin-top: 6px; } .mt7 { margin-top: 7px; } .mt8 { margin-top: 8px; } .mt9 { margin-top: 9px; } .mt10 { margin-top: 10px; } .mt11 { margin-top: 11px; } .mt12 { margin-top: 12px; } .mt16 { margin-top: 16px; }

.menus { display: flex; gap: 20px; flex: none; padding-left: 13px; white-space: nowrap; }
.m-top { width: 261px; }
.m-h { width: 228px; }

.toolcol { width: 159px; flex: none; display: flex; flex-direction: column; }
.shelf { flex: 1; display: flex; min-height: 0; }
.tabs { width: 19px; flex: none; background: #3b3b3b; padding: 6px 0 0 3px; display: flex; flex-direction: column; gap: 6px; }
.tab { width: 16px; background: #5f5f5f; border-radius: 3px 0 0 3px; display: flex; align-items: center; justify-content: center; overflow: hidden; }
.tab.on { background: #727272; }
.tab span { writing-mode: vertical-rl; text-orientation: sideways; transform: rotate(180deg); font-size: 10.5px; white-space: nowrap; }
.t44 { height: 44px; } .t32 { height: 32px; } .t87 { height: 87px; } .t54 { height: 54px; } .t98 { height: 98px; }
.panel { background: #707070; }
.tools { flex: 1; padding: 0 9px; border-right: 1px solid #5c5c5c; }
.oper { height: 216px; flex: none; padding: 0 8px 0 7px; border-top: 1px solid #5a5a5a; border-left: 1px solid #555; border-right: 1px solid #5c5c5c; }
.ph { height: 22px; display: flex; align-items: center; flex: none; }
.ph b { font-weight: normal; font-size: 11.500px; white-space: nowrap; }
.tri { width: 0; height: 0; flex: none; border-style: solid; border-width: 8px 4.500px 0; border-color: #222 transparent transparent; margin: 0 4px 0 5px; }
.tri.r { border-width: 4.500px 0 4.500px 8px; border-color: transparent transparent transparent #222; margin: 0 5px 0 5px; }
.grip { margin-left: auto; margin-right: 2px; width: 11px; height: 7px; flex: none; background-image: radial-gradient(circle, #303030 0 .7px, transparent 1px); background-size: 3px 3.500px; }
.sep { border: 0; height: 1px; background: #565656; margin-left: -4px; margin-right: -4px; margin-bottom: 0; box-shadow: 0 1px 0 #7c7c7c; }
.stack { display: flex; flex-direction: column; flex: none; border: 1px solid #262626; border-radius: 5px; overflow: hidden; }
.stack > * { flex: 1 1 0; min-height: 0; }
.stack > * + * { border-top: 1px solid #262626; }
.stack.round { border-radius: 9px; }
.s60 { height: 60px; } .s59 { height: 59px; } .s39 { height: 39px; }
.hstack { display: flex; height: 20px; border: 1px solid #2a2a2a; border-radius: 5px; overflow: hidden; }
.hstack .btn + .btn { border-left: 1px solid #2a2a2a; }
.b61 { width: 60px; flex: none; }
.lab { height: 18px; line-height: 20px; padding-left: 8px; white-space: nowrap; }
.lab.l20 { height: 20px; line-height: 20px; }
.oper .lab { padding-left: 9px; }
.dim { color: #555; }
.withic { display: flex; align-items: center; gap: 2px; margin-left: -2px; }

.viewport { position: relative; flex: 1; min-width: 0; background: #393939; overflow: hidden; }
.canvas { display: block; width: 100%; height: 100%; }
.crisp { shape-rendering: crispEdges; }
.vlabel { position: absolute; color: #efefef; white-space: nowrap; line-height: 14px; }
.vl-top { left: 20px; top: 11px; }
.vl-bot { left: 70px; top: 871px; letter-spacing: -.2px; }
.dots { fill: #141414; fill-opacity: .85; }
.lampline { stroke: #303030; stroke-width: 1; }
.lampring { fill: none; stroke: #111; stroke-width: 1.500; stroke-dasharray: 2 3; }
.lampcore { fill: #111; }
.wire { fill: none; stroke: #0a0a0a; stroke-width: 1.100; }
.wire1 { fill: none; stroke: #101010; stroke-width: 1.200; }
.solid { fill: #000; }
.sh-blue { stroke: #0000e0; stroke-width: 2; fill: none; }
.f-blue { fill: #0a0aff; }
.sh-green { stroke: #00c000; stroke-width: 1.500; fill: none; }
.f-green { fill: #00f000; }
.sh-red { stroke: #e00000; stroke-width: 1.500; fill: none; }
.f-red { fill: #f00000; }
.cur-w { fill: none; stroke: #fff; stroke-width: 1.300; }
.cur-r { fill: none; stroke: #f02020; stroke-width: 1.300; stroke-dasharray: 5 5; }
.cur-k { stroke: #000; stroke-width: 1.200; fill: none; }
.origin { fill: #b58a42; stroke: #222; stroke-width: .5; }
.g-b { stroke: #2040ff; fill: none; } .g-r { stroke: #ff2020; fill: none; } .g-g { stroke: #20e020; fill: none; }
.g-t { font: 9px "DejaVu Sans", sans-serif; fill: #ccc; }

.npanel { position: relative; width: 180px; flex: none; background: #707070; border-left: 1px solid #5c5c5c; overflow: hidden; }
.ncontent { width: 154px; padding-left: 8px; height: 100%; overflow: hidden; }
.first { margin-top: -3px; }
.locked { display: flex; gap: 8px; }
.locked .stack.round { flex: 1 1 0; min-width: 0; }
.locks { width: 28px; }
.locks .btn { padding: 0; justify-content: center; }
.num { background: linear-gradient(#8e8e8e, #b4b4b4); padding: 0 5px 0 6px; color: #111; }
.num span { margin-left: 5px; }
.num em, .sl em { font-style: normal; margin-left: auto; letter-spacing: -.2px; }
.num em { margin-right: 5px; }
.num.single { height: 20px; flex: none; border: 1px solid #2a2a2a; border-radius: 10px; }
.al, .ar { width: 0; height: 0; flex: none; border-style: solid; border-color: transparent; }
.al { border-width: 3.500px 4px 3.500px 0; border-right-color: #5c5c5c; }
.ar { border-width: 3.500px 0 3.500px 4px; border-left-color: #5c5c5c; }
.cb { width: 14px; height: 14px; flex: none; background: linear-gradient(#3c3c3c, #505050); border: 1px solid #2a2a2a; border-radius: 3px; display: flex; align-items: center; justify-content: center; }
.chk { height: 20px; display: flex; align-items: center; gap: 9px; padding-left: 2px; flex: none; white-space: nowrap; }
.whitetxt { color: #f2f2f2; }
.itemrow { display: flex; align-items: center; gap: 7px; padding-left: 4px; }
.nscroll { position: absolute; left: 163px; top: 6px; width: 13px; height: 882px; background: #5b5b5b; border-radius: 7px; }
.nthumb { position: absolute; left: 0; top: 94px; width: 13px; height: 690px; background: linear-gradient(90deg, #777, #8c8c8c); border-radius: 7px; }

.hdr { position: relative; flex: none; display: flex; align-items: center; padding-left: 9px; background: linear-gradient(#6a6a6a, #6f6f6f); }
.h26 { height: 26px; }
.h27 { height: 27px; padding-top: 1px; border-top: 1px solid #5c5c5c; }
.layers { width: 50px; height: 20px; flex: none; border: 1px solid #3a3a3a; border-radius: 4px; position: relative; background-color: #868686; background-image: linear-gradient(#3f3f3f, #3f3f3f), linear-gradient(90deg, transparent 9px, #555 9px, #555 10px); background-size: 100% 1px, 9.600px 100%; background-position: 0 9px, 0 0; background-repeat: no-repeat, repeat-x; }
.firstdot::after { content: ""; position: absolute; left: 2px; top: 2px; width: 5px; height: 5px; border-radius: 50%; background: #e89020; border: 1px solid #432; }

.timeline { position: relative; display: flex; height: 52px; flex: none; margin-top: 1px; background-color: #727272; background-image: linear-gradient(90deg, #545454 1px, transparent 1px), linear-gradient(90deg, #676767 1px, transparent 1px); background-size: 42.830px 100%, 42.830px 100%; background-position: 35.500px 0, 14.100px 0; }
.tl-a { width: 251px; flex: none; border-right: 1px solid #2e2e2e; }
.tl-in { width: 514px; flex: none; }
.tl-out { background: rgba(30, 30, 30, .55); }
.playhead { position: absolute; left: 317px; top: 0; bottom: 0; width: 3px; background: #55c02e; }
.ruler { position: relative; display: grid; grid-template-columns: repeat(34, 42.830px); margin: 0 5px 3px 4px; height: 13px; flex: none; padding-left: 9px; border: 1px solid #3e3e3e; border-radius: 7px; background: linear-gradient(#808080, #a4a4a4 70%, #8a8a8a); line-height: 12px; overflow: hidden; }
.ruler span { text-align: center; font-size: 11px; letter-spacing: -.2px; }
.knob { position: absolute; left: 1px; top: 1px; width: 8px; height: 9px; border-radius: 50%; background: #6a6a6a; }

.outliner { position: relative; height: 176px; flex: none; background: #707070; overflow: hidden; }
.ohdr { height: 27px; display: flex; align-items: center; padding: 0 2px 1px 9px; background: #6e6e6e; border-bottom: 1px solid #5f5f5f; white-space: nowrap; }
.ohdr > * { flex: none; }
.om1 { margin-left: 14px; } .om2 { margin-left: 20px; }
.ml { margin-left: 12px; }
.search { width: 110px; margin-left: 6px; border-radius: 5px 9px 9px 5px; }
.w.search { padding: 0 3px; }
.rows { position: relative; height: 149px; overflow: hidden; }
.row { position: relative; height: 20px; display: flex; align-items: center; background: #707070; }
.row.alt { background: #6a6a6a; }
.row.sel { background: linear-gradient(90deg, #7b8388 296px, #707070 296px); }
.rows::after { content: ""; position: absolute; left: 296px; top: 0; bottom: 0; width: 41px; border-left: 1px solid #5c5c5c; background: linear-gradient(90deg, transparent 19px, #5c5c5c 19px, #5c5c5c 20px, transparent 20px); pointer-events: none; }
.treeline { position: absolute; left: 27px; top: 20px; bottom: 0; width: 1px; background: #3a3a3a; }
.tog { width: 10px; height: 10px; flex: none; border-radius: 50%; border: 1px solid #222; background: linear-gradient(#e8e8e8, #b8b8b8); position: relative; z-index: 1; }
.tog::before { content: ""; position: absolute; left: 1px; right: 1px; top: 3px; height: 2px; background: #111; }
.tog::after { content: ""; position: absolute; top: 1px; bottom: 1px; left: 3px; width: 2px; background: #111; }
.tog.minus::after { display: none; }
.stub { width: 9px; height: 1px; background: #3a3a3a; flex: none; }
.stub.s1 { width: 8px; }
.r-scene { padding-left: 3px; }
.r-layer { padding-left: 28px; }
.r-world { padding-left: 41px; }
.r-obj { padding-left: 23px; }
.txt { white-space: nowrap; color: #111; letter-spacing: -.15px; margin-top: 2px; }
.halo { width: 18px; height: 18px; margin: 0 -1px; flex: none; border-radius: 50%; background: rgba(255, 255, 255, .22); display: flex; align-items: center; justify-content: center; position: relative; z-index: 1; }
.halob { border-radius: 50%; background: rgba(200, 210, 240, .4); outline: 1px solid rgba(220, 225, 245, .4); }
.vs { width: 2px; height: 14px; background: #4a4a4a; flex: none; margin: 0 8px 0 10px; }
.cols { position: absolute; left: 298px; top: 2px; display: flex; gap: 4px; }
.oscroll { position: absolute; left: 356px; top: 4px; width: 13px; height: 142px; background: #5b5b5b; border-radius: 7px; z-index: 2; }
.othumb { height: 130px; background: linear-gradient(90deg, #777, #8c8c8c); border-radius: 7px; }

.props { flex: 1; min-height: 0; display: flex; flex-direction: column; border-top: 1px solid #111; }
.phdr { position: relative; height: 27px; flex: none; display: flex; align-items: center; padding: 0 0 0 9px; background: #6e6e6e; border-bottom: 1px solid #5a5a5a; }
.pbody { flex: 1; padding: 7px 9px 0 8px; }
.crumb { height: 22px; display: flex; align-items: center; padding-left: 2px; }
.crumb span { margin-left: 5px; letter-spacing: -.15px; }
.crumbtri { margin-left: 8px; width: 0; height: 0; border-style: solid; border-width: 3.500px 0 3.500px 4px; border-color: transparent transparent transparent #3a3a3a; margin-right: -6px; }
.physgrid { display: grid; grid-template-columns: 173px 174px; column-gap: 9px; row-gap: 2px; }
.w.pb { padding: 0 0 0 3px; position: relative; }
.pb span { flex: 1; text-align: center; }
.wide { margin-left: -3px; margin-right: -3px; }
.mltri { margin-left: 5px; }
.cols2 { display: grid; grid-template-columns: 173px 174px; column-gap: 9px; }
.col { display: flex; flex-direction: column; min-width: 0; }
.sl { position: relative; background: linear-gradient(#8e8e8e, #b4b4b4); padding: 0 14px; height: 20px; flex: none; border: 1px solid #2a2a2a; border-radius: 9px; overflow: hidden; }
.stack > .sl { height: auto; flex: 1 1 0; border: 0; border-radius: 0; }
.stack > .sl + .sl { border-top: 1px solid #262626; }
.sl span, .sl em { position: relative; }
.fill { position: absolute; left: 0; top: 0; bottom: 0; background: linear-gradient(#585858, #747474); }
.pchk { padding-left: 3px; gap: 8px; }
```

FILE: script.js
```js
(function () {
  var NS = "http://www.w3.org/2000/svg";
  function proj(u, v) {
    var w = -0.1353 * u + 0.5753 * v + 1;
    return [(279.2 * u + 506.4 * v + 640) / w, (-38.3 * u + 146.4 * v + 609) / w];
  }
  var grid = document.getElementById("grid");
  function line(a, b, color) {
    var l = document.createElementNS(NS, "line");
    l.setAttribute("x1", a[0].toFixed(1)); l.setAttribute("y1", a[1].toFixed(1));
    l.setAttribute("x2", b[0].toFixed(1)); l.setAttribute("y2", b[1].toFixed(1));
    l.setAttribute("stroke", color);
    grid.appendChild(l);
  }
  for (var k = -8; k <= 8; k++) {
    if (k === 0) continue;
    line(proj(k / 8, -1), proj(k / 8, 1), "#4c4c4c");
    line(proj(-1, k / 8), proj(1, k / 8), "#4c4c4c");
  }
  line(proj(-1, 0), proj(1, 0), "#8c1616");
  line(proj(0, -1), proj(0, 1), "#2a7a2a");
  var c = [proj(-1, 1), proj(1, 1), proj(1, -1), proj(-1, -1)];
  for (var i = 0; i < 4; i++) line(c[i], c[(i + 1) % 4], "#f2a03a");

  // particle cloud (seeded so that every run is alike)
  var s = 12345;
  function rnd() { s = (s * 1103515245 + 12345) & 0x7fffffff; return s / 0x7fffffff; }
  function gauss() { return Math.sqrt(-2 * Math.log(rnd() + 1e-6)) * Math.cos(6.283 * rnd()); }
  var d = "";
  for (var n = 0; n < 1300; n++) {
    var x = 555 + gauss() * 52, y = 540 + gauss() * 38 + (x - 555) * -0.15;
    if (x > 650 || y > 625 || y < 445) continue;
    d += "M" + Math.round(x) + " " + Math.round(y) + "h1.5v1.5h-1.5z";
  }
  document.getElementById("dots").setAttribute("d", d);

  // icosphere wireframe, 2 subdivisions of the icosahedron
  var t = (1 + Math.sqrt(5)) / 2;
  var V = [[-1, t, 0], [1, t, 0], [-1, -t, 0], [1, -t, 0], [0, -1, t], [0, 1, t], [0, -1, -t], [0, 1, -t], [t, 0, -1], [t, 0, 1], [-t, 0, -1], [-t, 0, 1]];
  function dist(a, b) { return Math.hypot(a[0] - b[0], a[1] - b[1], a[2] - b[2]); }
  function norm(a) { var m = Math.hypot(a[0], a[1], a[2]); return [a[0] / m, a[1] / m, a[2] / m]; }
  function mid(a, b) { return [(a[0] + b[0]) / 2, (a[1] + b[1]) / 2, (a[2] + b[2]) / 2]; }
  var ax = 0.35, ay = 0.5, cx = Math.cos(ax), sx = Math.sin(ax), cy = Math.cos(ay), sy = Math.sin(ay);
  function screen(p0) {
    var p = norm(p0);
    var x1 = p[0] * cy + p[2] * sy, z1 = -p[0] * sy + p[2] * cy;
    var y2 = p[1] * cx - z1 * sx;
    return [704 + x1 * 44, 483 - y2 * 44];
  }
  var out = "";
  function seg(a, b) {
    var A = screen(a), B = screen(b);
    out += "M" + A[0].toFixed(1) + " " + A[1].toFixed(1) + "L" + B[0].toFixed(1) + " " + B[1].toFixed(1);
  }
  for (var a = 0; a < 12; a++) for (var b = a + 1; b < 12; b++) for (var e = b + 1; e < 12; e++) {
    if (Math.abs(dist(V[a], V[b]) - 2) < .01 && Math.abs(dist(V[a], V[e]) - 2) < .01 && Math.abs(dist(V[b], V[e]) - 2) < .01) {
      var ab = mid(V[a], V[b]), be = mid(V[b], V[e]), ea = mid(V[e], V[a]);
      seg(V[a], ab); seg(ab, V[b]); seg(V[b], be); seg(be, V[e]); seg(V[e], ea); seg(ea, V[a]);
      seg(ab, be); seg(be, ea); seg(ea, ab);
    }
  }
  document.getElementById("ico").setAttribute("d", out);
})();
```
